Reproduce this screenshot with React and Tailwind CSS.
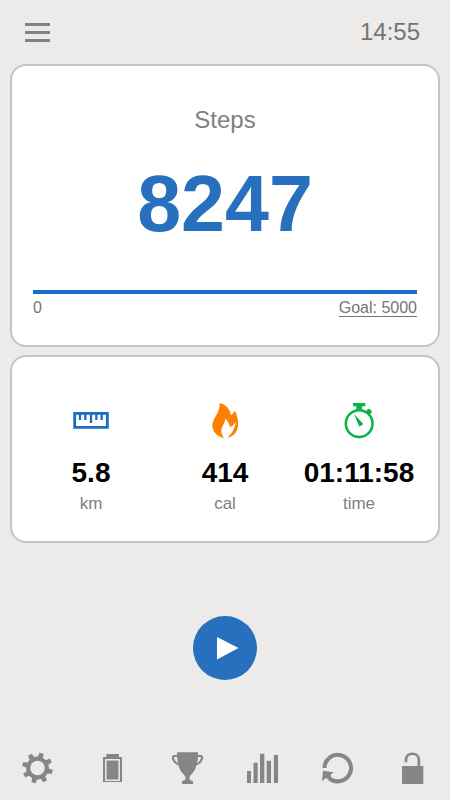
const toothAngles = [15, 60, 105, 150, 195, 240, 285, 330];

function GearIcon() {
  return (
    <svg className="h-9 w-[37px]" viewBox="27 30 111 108" fill="currentColor">
      <circle cx="82.5" cy="84" r="28" fill="none" stroke="currentColor" strokeWidth="12.5" />
      {toothAngles.map((a) => (
        <path key={a} d="M74.5 54L76 38H89L90.5 54Z" transform={`rotate(${a} 82.5 84)`} />
      ))}
    </svg>
  );
}

function BatteryIcon() {
  return (
    <svg className="h-9 w-[37px]" viewBox="252 30 111 108" fill="currentColor">
      <path d="M289 42H327V51H336V126H279V51H289Z" />
      <path d="M287.500 59H327.500V120.500H287.500Z" fill="none" stroke="#ecebe9" strokeWidth="4.5" />
    </svg>
  );
}

function TrophyIcon() {
  return (
    <svg className="h-9 w-[37px]" viewBox="27 30 111 108" fill="currentColor">
      <path d="M51 37H114V43C114 68 108 89 96 101C90 107 88 110 88 114C88 119 91 122 99 123V132H66V123C74 122 77 119 77 114C77 110 75 107 69 101C57 89 51 68 51 43Z" />
      <path
        d="M55 48H43C37 48 38 56 42 62C46 69 53 73 60 75M110 48H122C128 48 127 56 123 62C119 69 112 73 105 75"
        fill="none"
        stroke="currentColor"
        strokeWidth="6.5"
      />
    </svg>
  );
}

function BarsIcon() {
  return (
    <svg className="h-9 w-[37px]" viewBox="252 30 111 108" fill="currentColor">
      <path d="M261 93H273V129H261ZM280.500 68H293V129H280.500ZM300 41H313V129H300ZM320 62H333V129H320ZM341.500 45H354V129H341.500Z" />
    </svg>
  );
}

function RestartIcon() {
  return (
    <svg className="h-9 w-[37px]" viewBox="27 30 111 108" fill="currentColor">
      <path d="M43.500 84A39.700 39.700 0 1 1 58 115" fill="none" stroke="currentColor" strokeWidth="12" />
      <path d="M39 92L71 97L62 104L64 116L54 118L47 114L36 124Z" />
    </svg>
  );
}

function UnlockIcon() {
  return (
    <svg className="h-9 w-[37px]" viewBox="252 30 111 108" fill="currentColor">
      <path d="M276 78H340V132H276Z" />
      <path d="M288 67V60C288 35 326.500 35 326.500 60V80" fill="none" stroke="currentColor" strokeWidth="8" />
    </svg>
  );
}

function RulerIcon() {
  return (
    <svg className="h-[50px] w-[60px]" viewBox="3 0 180 150" fill="none" stroke="#1c6cc4">
      <path d="M44 55H142V97H44Z" strokeWidth="8.5" />
      <path d="M60 55V75M76 55V75M93 55V84M109 55V75M125 55V75" strokeWidth="7" />
    </svg>
  );
}

function FlameIcon() {
  return (
    <svg className="h-[50px] w-[50px]" viewBox="0 0 150 150">
      <path
        d="M59 24C76 28 91 42 92 60C98 57 102 52 105 47C112 62 116 78 114 93C112 112 100 125 82 128C94 117 103 104 108 80C102 88 98 93 91 96C87 88 86 79 75 71C76 87 65 91 64 106C63 115 67 122 73 129C53 126 39 113 37 94C35 71 61 55 59 24Z"
        fill="#ff8000"
      />
    </svg>
  );
}

function StopwatchIcon() {
  return (
    <svg className="h-[50px] w-[50px]" viewBox="-3 0 150 150" fill="#0bb049">
      <circle cx="72.5" cy="86" r="40" fill="none" stroke="#0bb049" strokeWidth="7.5" />
      <path d="M54 24H91V34H81V47H64V34H54Z" />
      <path d="M92 50L98 42L103 41L111 49L109 54L102 60Z" />
      <path d="M57 57L85 87L73 95Z" />
    </svg>
  );
}

const stats = [
  { Icon: RulerIcon, value: "5.8", label: "km" },
  { Icon: FlameIcon, value: "414", label: "cal" },
  { Icon: StopwatchIcon, value: "01:11:58", label: "time" },
];

const tools = [
  { Icon: GearIcon, label: "Settings" },
  { Icon: BatteryIcon, label: "Battery" },
  { Icon: TrophyIcon, label: "Achievements" },
  { Icon: BarsIcon, label: "Statistics" },
  { Icon: RestartIcon, label: "Reset" },
  { Icon: UnlockIcon, label: "Lock" },
];

export default function App() {
  return (
    <div className="flex h-[800px] w-[450px] flex-col overflow-hidden bg-[#ecebe9] font-['Liberation_Sans',Arial,sans-serif] text-[#808080]">
      <header className="flex h-16 shrink-0 items-center justify-between pr-[30px] pl-[25px]">
        <button aria-label="Menu" className="flex flex-col gap-[5px]">
          <span className="h-[3px] w-[25px] bg-[#838381]" />
          <span className="h-[3px] w-[25px] bg-[#838381]" />
          <span className="h-[3px] w-[25px] bg-[#838381]" />
        </button>
        <time className="text-2xl leading-8 text-[#757573]">14:55</time>
      </header>

      <section className="mx-2.5 flex h-[283px] shrink-0 flex-col rounded-2xl border-2 border-[#c4c4c4] bg-white px-[21px] pt-[38px]">
        <h1 className="text-center text-2xl leading-8">Steps</h1>
        <p className="mt-[22px] text-center text-[79px] leading-[92px] font-bold text-[#2670be]">8247</p>
        <div className="mt-[39.5px] h-[4.5px] bg-[#1670c5]" />
        <div className="mt-[2px] flex justify-between text-base leading-6 text-[#757575]">
          <span>0</span>
          <span className="underline decoration-1 underline-offset-[3px]">Goal: 5000</span>
        </div>
      </section>

      <section className="mx-2.5 mt-2 grid h-[188px] shrink-0 grid-cols-[134px_134px_134px] justify-center rounded-2xl border-2 border-[#c4c4c4] bg-white pt-[38px]">
        {stats.map(({ Icon, value, label }) => (
          <div key={label} className="flex flex-col items-center">
            <Icon />
            <span className="mt-3 text-[28px] leading-8 font-bold text-black">{value}</span>
            <span className="mt-[3px] text-[17px] leading-6">{label}</span>
          </div>
        ))}
      </section>

      <div className="flex h-[207px] shrink-0 items-center justify-center pt-[3px]">
        <button aria-label="Play" className="flex h-16 w-16 items-center justify-center rounded-full bg-[#2670be]">
          <svg className="h-16 w-16" viewBox="0 0 64 64" fill="white">
            <path d="M24 21L45.500 32L24 43.500Z" />
          </svg>
        </button>
      </div>

      <nav className="grid shrink-0 grid-cols-6 text-[#868686]">
        {tools.map(({ Icon, label }) => (
          <button key={label} aria-label={label} className="flex justify-center">
            <Icon />
          </button>
        ))}
      </nav>
    </div>
  );
}
